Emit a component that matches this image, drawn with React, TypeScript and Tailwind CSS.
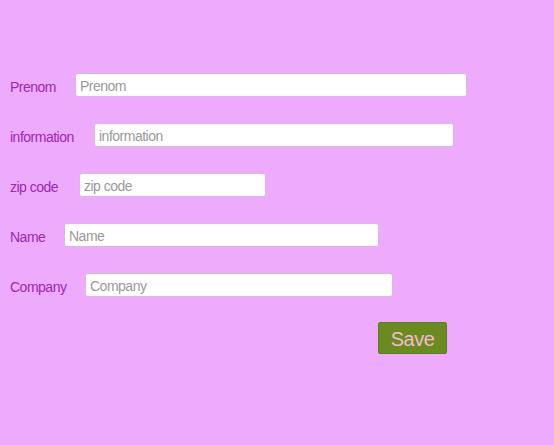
const fields = [
  { label: "Prenom", labelWidth: "w-[65px]", width: "w-[392px]" },
  { label: "information", labelWidth: "w-[84px]", width: "w-[360px]" },
  { label: "zip code", labelWidth: "w-[69px]", width: "w-[187px]" },
  { label: "Name", labelWidth: "w-[54px]", width: "w-[315px]" },
  { label: "Company", labelWidth: "w-[75px]", width: "w-[308px]" },
];

export default function App() {
  return (
    <div className="min-h-[445px] w-full bg-[#eeaafd] pt-[73px] pl-[10px] font-['Liberation_Sans',Arial,sans-serif]">
      <form className="flex flex-col gap-[26px]">
        {fields.map((f) => (
          <div key={f.label} className="flex h-6 items-center">
            <label className={`${f.labelWidth} mt-[3px] shrink-0 text-sm tracking-[-0.5px] text-[#9a28b8]`}>
              {f.label}
            </label>
            <input
              type="text"
              placeholder={f.label}
              className={`${f.width} h-6 rounded-[3px] border border-[#d9b8e0] bg-white px-1 pt-[2px] text-sm tracking-[-0.5px] text-gray-700 placeholder:text-[#9a9a9a] outline-none`}
            />
          </div>
        ))}
      </form>
      <div className="mt-[25px] pl-[368px]">
        <button
          type="button"
          className="h-8 w-[69px] rounded-[2px] border border-[#5e7d1c] bg-[#6b8a1f] pt-[2px] text-xl tracking-[-0.5px] text-[#f5b9d2]"
        >
          Save
        </button>
      </div>
    </div>
  );
}
